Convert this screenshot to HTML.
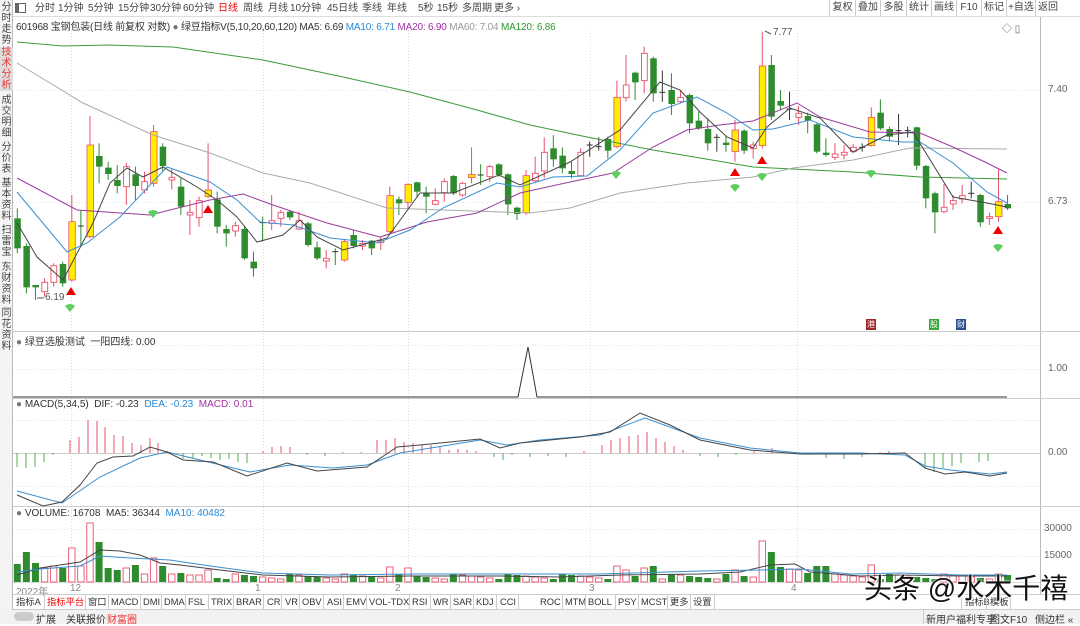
<!DOCTYPE html>
<html><head><meta charset="utf-8"><style>
*{margin:0;padding:0;box-sizing:border-box}
body{width:1080px;height:624px;overflow:hidden;background:#fff;font-family:"Liberation Sans","Noto Sans CJK SC",sans-serif;font-size:10px;color:#333;position:relative}
.a{position:absolute;white-space:nowrap}
#side{position:absolute;left:0;top:0;width:13px;height:624px;background:#f4f4f4;border-right:1px solid #bbb}
.sv{position:absolute;left:0;width:13px;font-size:10px;line-height:11px;text-align:center;color:#444}
.tb{position:absolute;top:3px;font-size:10px;line-height:11px;color:#444;white-space:nowrap}
.rb{position:absolute;top:0;height:16px;border-left:1px solid #ccc;font-size:10px;line-height:16px;color:#444;text-align:center;white-space:nowrap}
.tab{position:absolute;top:595px;height:14px;line-height:14px;font-size:9.3px;color:#333;white-space:nowrap}
.sep{position:absolute;top:595px;width:1px;height:14px;background:#ccc}
</style></head><body>
<svg id="s" class="a" style="left:0;top:0" width="1080" height="624"></svg>

<div id="side">
<div class="sv" style="top:2px">分<br>时<br>走<br>势</div>
<div class="sv" style="top:47px;height:44px;background:#ddd;color:#e33">技<br>术<br>分<br>析</div>
<div class="sv" style="top:95px">成<br>交<br>明<br>细</div>
<div class="sv" style="top:142px">分<br>价<br>表</div>
<div class="sv" style="top:178px">基<br>本<br>资<br>料</div>
<div class="sv" style="top:225px">扫<br>雷<br>宝</div>
<div class="sv" style="top:262px">东<br>财<br>资<br>料</div>
<div class="sv" style="top:308px">同<br>花<br>资<br>料</div>
</div>

<div class="a" style="left:13px;top:16px;width:1067px;height:1px;background:#ddd"></div>
<div class="a" style="left:15px;top:3px;width:11px;height:10px;border:1px solid #666"></div>
<div class="a" style="left:16px;top:4px;width:3px;height:8px;background:#666"></div>
<div class="tb" style="left:35px">分时</div>
<div class="tb" style="left:58px">1分钟</div>
<div class="tb" style="left:88px">5分钟</div>
<div class="tb" style="left:118px">15分钟</div>
<div class="tb" style="left:150px">30分钟</div>
<div class="tb" style="left:183px">60分钟</div>
<div class="tb" style="left:218px;color:#e00">日线</div>
<div class="tb" style="left:243px">周线</div>
<div class="tb" style="left:268px">月线</div>
<div class="tb" style="left:290px">10分钟</div>
<div class="tb" style="left:327px">45日线</div>
<div class="tb" style="left:362px">季线</div>
<div class="tb" style="left:387px">年线</div>
<div class="tb" style="left:418px">5秒</div>
<div class="tb" style="left:437px">15秒</div>
<div class="tb" style="left:462px">多周期</div>
<div class="tb" style="left:494px">更多 ›</div>
<div class="rb" style="left:829px;width:26px">复权</div>
<div class="rb" style="left:855px;width:25px">叠加</div>
<div class="rb" style="left:880px;width:26px">多股</div>
<div class="rb" style="left:906px;width:25px">统计</div>
<div class="rb" style="left:931px;width:25px">画线</div>
<div class="rb" style="left:956px;width:25px">F10</div>
<div class="rb" style="left:981px;width:25px">标记</div>
<div class="rb" style="left:1006px;width:29px">+自选</div>
<div class="rb" style="left:1035px;width:45px;text-align:left;padding-left:2px">返回</div>

<div class="a" style="left:16px;top:18px;font-size:10px;color:#333;letter-spacing:-0.2px">601968 宝钢包装(日线 前复权 对数) <span style="color:#777">●</span> 绿豆指标V(5,10,20,60,120) MA5: 6.69 <span style="color:#2a8ad4">MA10: 6.71</span> <span style="color:#a030a0">MA20: 6.90</span> <span style="color:#999">MA60: 7.04</span> <span style="color:#2a9a2a">MA120: 6.86</span></div>
<div class="a" style="left:1002px;top:20px;font-size:10px;color:#666">◇ ▯</div>

<div class="a" style="left:1048px;top:84px;font-size:10px;color:#666">7.40</div>
<div class="a" style="left:1048px;top:196px;font-size:10px;color:#666">6.73</div>
<div class="a" style="left:1048px;top:363px;font-size:10px;color:#666">1.00</div>
<div class="a" style="left:1048px;top:447px;font-size:10px;color:#666">0.00</div>
<div class="a" style="left:1044px;top:523px;font-size:10px;color:#666">30000</div>
<div class="a" style="left:1044px;top:550px;font-size:10px;color:#666">15000</div>
<div class="a" style="left:773px;top:27px;font-size:10px;color:#555">7.77</div>
<div class="a" style="left:45px;top:292px;font-size:10px;color:#555">6.19</div>

<div class="a" style="left:16px;top:333px;font-size:10px;color:#333"><span style="color:#777">●</span> 绿豆选股测试 &nbsp;一阳四线: 0.00</div>
<div class="a" style="left:16px;top:399px;font-size:10px;color:#333"><span style="color:#777">●</span> MACD(5,34,5) &nbsp;DIF: -0.23 &nbsp;<span style="color:#2a8ad4">DEA: -0.23</span> &nbsp;<span style="color:#a030a0">MACD: 0.01</span></div>
<div class="a" style="left:16px;top:508px;font-size:10px;color:#333"><span style="color:#777">●</span> VOLUME: 16708 &nbsp;MA5: 36344 &nbsp;<span style="color:#2a8ad4">MA10: 40482</span></div>

<div class="a" style="left:16px;top:583px;font-size:10px;color:#888">2022年</div>
<div class="a" style="left:70px;top:583px;font-size:10px;color:#888">12</div>
<div class="a" style="left:255px;top:583px;font-size:10px;color:#888">1</div>
<div class="a" style="left:395px;top:583px;font-size:10px;color:#888">2</div>
<div class="a" style="left:589px;top:583px;font-size:10px;color:#888">3</div>
<div class="a" style="left:791px;top:583px;font-size:10px;color:#888">4</div>

<div class="a" style="left:866px;top:319px;width:10px;height:11px;background:#a0262a;color:#fff;font-size:8px;line-height:11px;text-align:center">港</div>
<div class="a" style="left:929px;top:319px;width:10px;height:11px;background:#3aa63a;color:#fff;font-size:8px;line-height:11px;text-align:center">股</div>
<div class="a" style="left:956px;top:319px;width:10px;height:11px;background:#2a4f8f;color:#fff;font-size:8px;line-height:11px;text-align:center">财</div>

<div class="a" style="left:13px;top:594px;width:1067px;height:1px;background:#ccc"></div>
<div class="a" style="left:13px;top:609px;width:1067px;height:1px;background:#ccc"></div>
<div class="tab" style="left:16px">指标A</div>
<div class="tab" style="left:47px;color:#e00">指标平台</div>
<div class="tab" style="left:88px">窗口</div>
<div class="tab" style="left:111px">MACD</div>
<div class="tab" style="left:143px">DMI</div>
<div class="tab" style="left:164px">DMA</div>
<div class="tab" style="left:188px">FSL</div>
<div class="tab" style="left:211px">TRIX</div>
<div class="tab" style="left:236px">BRAR</div>
<div class="tab" style="left:267px">CR</div>
<div class="tab" style="left:285px">VR</div>
<div class="tab" style="left:302px">OBV</div>
<div class="tab" style="left:327px">ASI</div>
<div class="tab" style="left:346px">EMV</div>
<div class="tab" style="left:369px">VOL-TDX</div>
<div class="tab" style="left:412px">RSI</div>
<div class="tab" style="left:433px">WR</div>
<div class="tab" style="left:453px">SAR</div>
<div class="tab" style="left:476px">KDJ</div>
<div class="tab" style="left:500px">CCI</div>
<div class="tab" style="left:540px">ROC</div>
<div class="tab" style="left:565px">MTM</div>
<div class="tab" style="left:588px">BOLL</div>
<div class="tab" style="left:618px">PSY</div>
<div class="tab" style="left:641px">MCST</div>
<div class="tab" style="left:670px">更多</div>
<div class="tab" style="left:693px">设置</div>
<div class="tab" style="left:965px">指标B</div>
<div class="tab" style="left:990px">模板</div>
<div class="sep" style="left:44px"></div><div class="sep" style="left:85px"></div><div class="sep" style="left:108px"></div><div class="sep" style="left:140px"></div><div class="sep" style="left:161px"></div><div class="sep" style="left:185px"></div><div class="sep" style="left:208px"></div><div class="sep" style="left:233px"></div><div class="sep" style="left:263px"></div><div class="sep" style="left:281px"></div><div class="sep" style="left:299px"></div><div class="sep" style="left:323px"></div><div class="sep" style="left:343px"></div><div class="sep" style="left:366px"></div><div class="sep" style="left:409px"></div><div class="sep" style="left:430px"></div><div class="sep" style="left:450px"></div><div class="sep" style="left:473px"></div><div class="sep" style="left:496px"></div><div class="sep" style="left:518px"></div><div class="sep" style="left:562px"></div><div class="sep" style="left:585px"></div><div class="sep" style="left:615px"></div><div class="sep" style="left:638px"></div><div class="sep" style="left:667px"></div><div class="sep" style="left:690px"></div><div class="sep" style="left:714px"></div><div class="sep" style="left:961px"></div><div class="sep" style="left:986px"></div><div class="sep" style="left:1010px"></div>

<div class="a" style="left:0;top:610px;width:1080px;height:14px;background:#f2f2f2"></div>
<div class="a" style="left:14px;top:612px;width:20px;height:9px;border-radius:5px;background:#ccc"></div>
<div class="a" style="left:36px;top:611px">扩展</div>
<div class="a" style="left:66px;top:611px">关联报价</div>
<div class="a" style="left:107px;top:611px;color:#e33">财富圈</div>
<div class="a" style="left:923px;top:610px;width:1px;height:14px;background:#ccc"></div>
<div class="a" style="left:926px;top:611px">新用户福利专享</div>
<div class="a" style="left:990px;top:611px">图文F10</div>
<div class="a" style="left:1035px;top:611px">侧边栏 «</div>

<div class="a" style="left:864px;top:567px;font-size:28px;color:#111;text-shadow:0 0 2px #fff,0 0 2px #fff,1px 1px 0 #fff">头条 @水木千禧</div>

<script>
const s=document.getElementById('s');let h='';
const L=(x1,y1,x2,y2,c,w,d)=>h+=`<line x1="${x1}" y1="${y1}" x2="${x2}" y2="${y2}" stroke="${c}" stroke-width="${w||1}" ${d?'stroke-dasharray="'+d+'"':''}/>`;
const P=(pts,c,w)=>h+=`<polyline fill="none" stroke="${c}" stroke-width="${w||1}" points="${pts.map(p=>p.join(',')).join(' ')}"/>`;
L(1040.5,16,1040.5,594,'#bbb');L(13,331.5,1080,331.5,'#ccc');L(13,398.5,1080,398.5,'#ccc');L(13,506.5,1080,506.5,'#ccc');L(13,582.5,1040,582.5,'#ddd');
[71,263,408,590,797].forEach(x=>L(x+.5,30,x+.5,582,'#ddd',1,'1,2'));
[90,202].forEach(y=>L(13,y+.5,1040,y+.5,'#e2e2e2',1,'1,2'));
[345,369].forEach(y=>L(13,y+.5,1040,y+.5,'#e2e2e2',1,'1,2'));
[420,453,486].forEach(y=>L(13,y+.5,1040,y+.5,'#e2e2e2',1,'1,2'));
[529,556].forEach(y=>L(13,y+.5,1040,y+.5,'#e2e2e2',1,'1,2'));
L(13,453.5,1040,453.5,'#ccc');
const C=[['g',565,655,535,670],['g',648,772,640,790],['g',765,772,765,810],['r',757,785,745,800],['r',707,757,700,770],['g',702,760,695,770],['y',575,750,495,755],['c',588,588,540,650],['y',345,620,258,625],['g',378,410,340,460],['g',413,432,395,450],['g',450,468,405,490],['r',410,470,398,525],['g',433,468,410,510],['r',455,480,425,490],['y',305,460,285,470],['g',350,408,340,425],['r',442,450,418,478],['g',470,530,445,555],['r',547,555,510,615],['r',512,563,500,590],['y',480,500,340,505],['g',508,590,485,610],['g',597,610,585,650],['r',587,603,575,620],['g',597,685,590,690],['g',695,715,665,740],['c',578,578,560,635],['r',572,580,495,600],['r',548,565,540,590],['g',545,562,540,570],['r',572,597,545,600],['g',580,645,575,650],['g',652,685,635,690],['r',685,693,660,715],['c',665,665,655,705],['y',635,690,630,695],['g',615,648,600,655],['r',640,648,630,660],['g',632,655,630,675],['r',632,638,620,660],['y',497,605,470,610],['g',508,520,500,555],['y',463,517,460,540],['g',457,485,455,500],['g',488,500,470,550],['r',512,523,475,525],['r',455,488,445,515],['g',438,490,435,495],['r',460,495,455,500],['y',433,443,352,460],['c',435,435,403,465],['r',410,440,405,455],['g',403,435,400,440],['g',433,523,430,555],['g',533,552,530,570],['y',437,548,420,555],
['r',430,452,380,460],['r',367,423,322,445],['g',355,388,315,410],['g',377,415,352,430],['g',423,432,395,445],['r',367,437,355,440],['c',345,345,335,380],['c',350,350,322,362],['g',327,362,320,385],['y',202,350,152,355],['r',165,203,75,215],['g',128,157,125,210],['r',70,152,50,190],['g',85,190,80,215],['c',187,187,122,215],['g',180,222,130,255],['r',203,215,180,220],['g',195,280,190,310],['g',272,295,245,300],['g',297,340,265,362],['c',322,322,312,365],['g',338,345,318,365],['y',300,365,270,395],['g',302,362,297,372],['r',345,356,335,385],['y',108,347,5,355],['g',105,260,75,270],['g',213,227,180,240],['c',237,237,185,270],['r',250,262,228,285],['g',258,272,248,310],['g',283,365,280,370],['g',368,375,325,380],['r',372,382,340,390],['r',367,375,345,388],['r',352,365,342,370],['c',352,352,340,365],['y',262,347,232,350],['g',248,295,208,300],['g',297,320,290,335],['c',302,302,252,345],['c',302,302,290,322],['g',292,407,290,420],['g',408,505,405,535],['g',490,547,485,610],['r',532,545,462,550],['r',512,522,495,540],['r',497,507,465,520],['c',490,490,455,505],['g',495,577,492,590],['r',560,565,548,585],['y',515,560,418,575],['g',522,535,495,540]];
const V={1:564,2:552,3:563,4:568,5:566,6:568,7:548,8:566,9:523,10:542,11:568,12:570,13:568,14:565,15:574,16:558,17:566,18:574,19:573,20:575,21:575,22:570,42:567,44:568,67:566,68:570,70:568,71:566,80:570,83:541,84:552,85:567,86:569,87:570,88:573,89:566,90:566,95:565};
const G='#2e8b2e',R='#e8506a';
const X=i=>17.3+i*9.085, Y=v=>30+v/3;
C.forEach((c,i)=>{const x=X(i);const[t,a,b,hi,lo]=c;const ya=Y(a),yb=Y(b);
 const col=t=='g'?G:(t=='c'?'#333':R);
 if(t=='c'){L(x,Y(hi),x,Y(lo),i>60?'#333':G);L(x-3,ya,x+3,ya,'#333');}
 else{L(x,Y(hi),x,Y(lo),col);
  if(t=='g')h+=`<rect x="${x-3}" y="${ya}" width="6.5" height="${Math.max(1.5,yb-ya)}" fill="${G}"/>`;
  else if(t=='y')h+=`<rect x="${x-3}" y="${ya}" width="6.5" height="${yb-ya}" fill="#ffee00" stroke="${R}" stroke-width=".8"/>`;
  else h+=`<rect x="${x-2.7}" y="${ya}" width="5.8" height="${Math.max(1.5,yb-ya)}" fill="#fff" stroke="${R}" stroke-width=".9"/>`;}
 let vt=V[i+1]||(574+((i*37)%6));const vb=582;
 if(t=='g')h+=`<rect x="${x-3.5}" y="${vt}" width="7" height="${vb-vt}" fill="${G}"/>`;
 else h+=`<rect x="${x-3.2}" y="${vt}" width="6.4" height="${vb-vt}" fill="#fff" stroke="${R}" stroke-width=".9"/>`;
});
P([[17,42],[63,46],[108,45],[173,47],[263,60],[343,77],[410,92],[477,110],[530,125],[587,137],[653,150],[753,167],[853,172],[920,177],[1007,179]],'#3a9a3a');
P([[17,63],[83,103],[153,135],[210,153],[263,173],[310,183],[387,208],[443,210],[530,213],[570,208],[620,193],[687,183],[753,177],[793,168],[853,160],[910,148],[1007,149]],'#aaa');
P([[17,178],[77,210],[150,215],[210,200],[243,194],[273,205],[327,223],[380,237],[427,222],[477,213],[520,193],[570,182],[613,173],[653,147],[687,130],[720,125],[753,121],[797,103],[820,117],[870,132],[920,133],[953,147],[987,163],[1007,173]],'#9b3c9b');
P([[17,192],[67,252],[87,243],[120,217],[167,167],[210,182],[237,200],[260,222],[293,225],[330,238],[377,243],[410,230],[443,208],[497,183],[520,187],[553,177],[587,176],[620,150],[653,113],[697,97],[727,113],[753,130],[773,129],[810,120],[853,137],[903,142],[920,142],[953,163],[987,192],[1007,203]],'#3a8fd0');
P([[17,223],[37,257],[63,280],[93,223],[110,183],[127,168],[143,177],[163,167],[197,187],[217,200],[237,217],[257,242],[283,235],[300,220],[317,237],[343,250],[387,238],[420,193],[453,193],[499,175],[520,185],[570,162],[620,130],[660,82],[680,90],[700,112],[727,137],[753,148],[767,127],[790,108],[820,118],[853,152],[887,135],[913,132],[953,197],[987,203],[1007,207]],'#444');
L(765,31,771,34,'#555');L(37,298,44,298,'#555');
[[71,291],[208,209],[735,172],[762,160],[998,230]].forEach(([x,y])=>h+=`<path d="M${x-5},${y+4} L${x},${y-4} L${x+5},${y+4}Z" fill="#e00"/>`);
[[70,308],[153,214],[616,175],[735,188],[762,177],[871,174],[998,248]].forEach(([x,y])=>h+=`<path d="M${x-5},${y-2} Q${x},${y-6} ${x+5},${y-2} L${x},${y+4}Z" fill="#5ecf5e"/>`);
P([[13,397],[518,397],[528,347],[537,397],[1007,397]],'#333');
const hb=[[17,467,'g'],[26,468,'g'],[35,467,'g'],[44,462,'g'],[53,455,'g'],[70,440,'r'],[79,437,'r'],[88,420,'r'],[97,421,'r'],[105,427,'r'],[114,435,'r'],[123,436,'r'],[132,443,'r'],[141,445,'r'],[150,438,'r'],[158,443,'r'],[167,451,'r'],[183,459,'g'],[193,458,'g'],[202,456,'g'],[211,458,'g'],[220,460,'g'],[229,459,'g'],[238,462,'g'],[247,463,'g'],[263,451,'r'],[272,447,'r'],[281,446,'r'],[290,447,'r'],[307,455,'g'],[325,456,'g'],[343,452,'r'],[361,452,'r'],[377,440,'r'],[386,440,'r'],[395,438,'r'],[404,442,'r'],[413,443,'r'],[422,445,'r'],[431,445,'r'],[440,447,'r'],[449,450,'r'],[458,449,'r'],[467,450,'r'],[476,451,'r'],[494,457,'g'],[503,460,'g'],[512,455,'g'],[530,457,'g'],[548,456,'g'],[566,457,'g'],[584,451,'r'],[602,445,'r'],[611,440,'r'],[620,438,'r'],[629,436,'r'],[638,435,'r'],[647,432,'r'],[656,438,'r'],[665,442,'r'],[674,446,'r'],[683,450,'r'],[700,456,'g'],[718,457,'g'],[736,455,'g'],[754,451,'r'],[772,448,'r'],[790,452,'r'],[808,455,'g'],[826,458,'g'],[844,459,'g'],[862,457,'g'],[880,452,'r'],[889,451,'r'],[898,453,'r'],[925,468,'g'],[934,472,'g'],[943,468,'g'],[952,466,'g'],[961,463,'g'],[979,462,'g'],[988,461,'g']];
hb.forEach(([x,y,c])=>L(x,453,x,y,c=='g'?'#4caf4c':'#e8506a'));
P([[17,491],[62,503],[100,477],[140,458],[167,452],[200,460],[250,472],[290,465],[333,468],[367,465],[400,453],[480,440],[507,445],[540,440],[600,435],[645,418],[700,438],[750,448],[800,453],[860,453],[905,455],[925,466],[950,470],[990,474],[1007,472]],'#3a8fd0');
P([[17,495],[43,506],[62,502],[80,485],[97,463],[113,457],[133,456],[150,447],[167,452],[183,460],[213,462],[247,476],[287,463],[317,471],[367,467],[397,447],[420,445],[480,439],[500,448],[520,443],[580,437],[610,432],[640,413],[670,425],[700,440],[750,450],[800,454],[860,454],[905,453],[925,468],[945,474],[965,472],[990,476],[1007,473]],'#444');
P([[17,575],[40,568],[60,565],[80,562],[100,550],[120,551],[140,555],[160,563],[180,565],[220,570],[263,575],[330,577],[410,576],[500,576],[560,577],[620,575],[700,574],[740,572],[770,565],[795,564],[810,572],[860,576],[900,575],[960,576],[1007,576]],'#444');
P([[17,572],[40,569],[80,566],[100,556],[130,558],[170,560],[210,566],[263,573],[330,575],[420,574],[500,574],[600,574],[700,571],[760,570],[800,569],[850,574],[900,573],[960,575],[1007,575]],'#3a8fd0');
s.innerHTML=h;
</script>
</body></html>
